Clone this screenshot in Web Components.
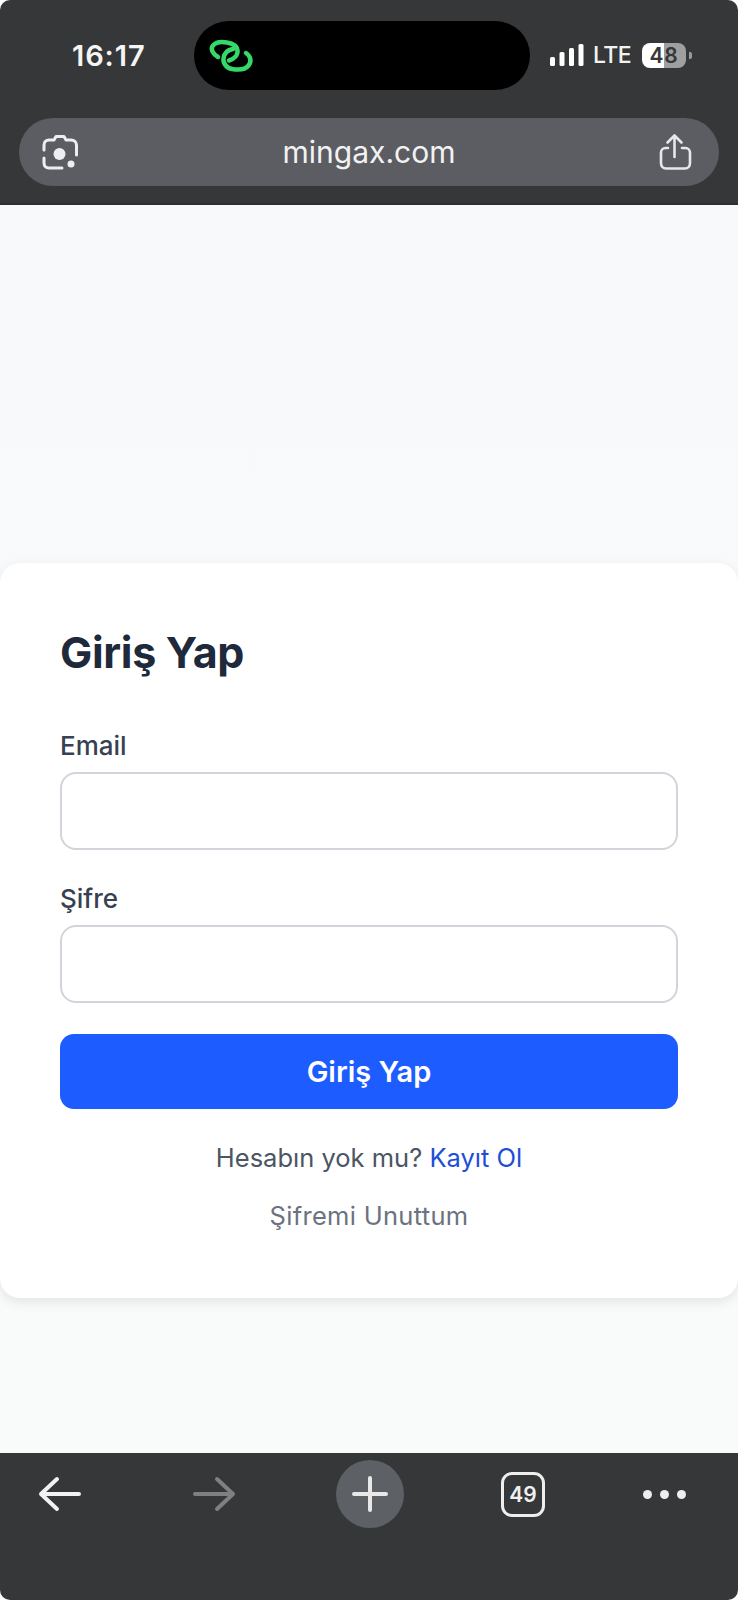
<!DOCTYPE html>
<html lang="tr">
<head>
<meta charset="utf-8">
<title>Giriş Yap</title>
<style>
  html, body { margin: 0; padding: 0; background: #fff; }
  body { width: 738px; height: 1600px; overflow: hidden; font-family: Inter, "Liberation Sans", sans-serif; }
</style>
</head>
<body>
<phone-page>
  <browser-top slot="top" time="16:17" url="mingax.com" battery="48"></browser-top>
  <login-card title="Giriş Yap">
    <form-field label="Email"></form-field>
    <form-field label="Şifre"></form-field>
    <submit-button>Giriş Yap</submit-button>
    <div slot="links" style="color:#4b5563">Hesabın yok mu? <span style="color:#1d4ed8">Kayıt Ol</span></div>
    <div slot="links" style="color:#6b7280;letter-spacing:.3px">Şifremi Unuttum</div>
  </login-card>
  <browser-bottom slot="bottom" tabs="49"></browser-bottom>
</phone-page>

<script>
// page shell: top bar, grey area with the card, bottom bar
class PhonePage extends HTMLElement {
  constructor() {
    super();
    this.attachShadow({ mode: "open" });
    this.shadowRoot.innerHTML = `
      <style>
        :host { display: flex; flex-direction: column; width: 738px; height: 1600px; }
        main { flex: 1; background: linear-gradient(#f8f9fb, #f9fafa); padding-top: 358px; box-sizing: border-box; }
      </style>
      <slot name="top"></slot>
      <main><slot></slot></main>
      <slot name="bottom"></slot>
    `;
  }
}

class BrowserTop extends HTMLElement {
  constructor() {
    super();
    this.attachShadow({ mode: "open" });
  }

  connectedCallback() {
    const time = this.getAttribute("time");
    const url = this.getAttribute("url");
    const battery = this.getAttribute("battery");
    this.shadowRoot.innerHTML = `
      <style>
        :host { display: block; height: 205px; box-sizing: border-box; background: #363739; border-bottom: 2px solid #2e2f31; border-radius: 10px 10px 0 0; color: #fff; font-family: Inter, "Liberation Sans", sans-serif; }
        .status { display: flex; align-items: center; height: 69px; padding-top: 21px; }
        .time { width: 194px; box-sizing: border-box; padding-left: 72px; font-size: 29px; font-weight: 600; letter-spacing: .9px; color: #f5f5f5; }
        .island { width: 336px; height: 69px; border-radius: 35px; background: #000; position: relative; }
        .island svg { position: absolute; left: 6px; top: 9px; }
        .right { display: flex; align-items: center; margin-left: 20px; margin-top: -1px; }
        .lte { font-size: 23px; font-weight: 500; margin: 0 11px 0 9px; color: #f2f2f2; letter-spacing: -.6px; }
        .batt { width: 44px; height: 25px; border-radius: 8px; overflow: hidden; background: linear-gradient(90deg, #fff 0 49%, #9f9f9f 49%); color: #363739; font-size: 21px; font-weight: 600; line-height: 25px; text-align: center; letter-spacing: .6px; }
        .nub { width: 3px; height: 7px; background: #9a9a9a; border-radius: 0 2px 2px 0; margin-left: 3px; }
        .bar { display: flex; align-items: center; justify-content: space-between; margin: 28px 19px 0 19px; height: 68px; border-radius: 34px; background: #5b5d63; padding: 0 19px 0 16px; position: relative; }
        .url { position: absolute; left: 0; right: 0; text-align: center; font-size: 30px; color: #f2f2f2; line-height: 66px; }
        .bar svg { display: block; position: relative; margin-top: -4px; }
      </style>
      <div class="status">
        <div class="time">${time}</div>
        <div class="island">
          <svg width="60" height="50" viewBox="0 0 60 50" fill="none" stroke="#34d96a" stroke-width="4.500" stroke-linecap="round" stroke-linejoin="round">
            <path d="M18 27 C13 24 10 19 13 15.500 C16 12 22 11.500 27 12.500 C33 13.500 37 16 37.500 20.500 C38 25 34.500 29 29 30.500"/>
            <path d="M33 19 C27 20 24 24 23.500 28.500 C23 33.500 26.500 38 32 39 C38 40 45 40 48.500 35.500 C52 31 50.500 26 46 23"/>
          </svg>
        </div>
        <div class="right">
          <svg width="34" height="22" viewBox="0 0 34 22" fill="#fff">
            <rect x="0" y="13" width="5" height="9" rx="1.5"/>
            <rect x="9.500" y="8" width="5" height="14" rx="1.5"/>
            <rect x="19" y="4" width="5" height="18" rx="1.5"/>
            <rect x="28.500" y="0" width="5" height="22" rx="1.5"/>
          </svg>
          <span class="lte">LTE</span>
          <div class="batt">${battery}</div>
          <div class="nub"></div>
        </div>
      </div>
      <div class="bar">
        <svg width="50" height="50" viewBox="0 0 50 50" fill="none" stroke="#eceef2" stroke-width="3" stroke-linecap="round" stroke-linejoin="round">
          <path d="M9 25 V20 C9 17 11 15 14 15 H19 L21 11.500 H29 L31 15 H36 C39 15 41.500 17 41.500 20 V30"/>
          <path d="M9 33 V38 C9 41 11 43 14 43 H27"/>
          <circle cx="24.500" cy="29" r="6" fill="#eceef2" stroke="none"/>
          <circle cx="36" cy="39" r="3.500" fill="#eceef2" stroke="none"/>
        </svg>
        <div class="url">${url}</div>
        <svg width="50" height="50" viewBox="0 0 50 50" fill="none" stroke="#e6e8ea" stroke-width="2.6" stroke-linecap="round" stroke-linejoin="round">
          <path d="M24.500 32 V11 M17.500 17.500 L24.500 10.500 L31.500 17.500"/>
          <path d="M18 23 H15.500 C13 23 11 25 11 27.500 V38 C11 41 13 43.500 16 43.500 H35 C38 43.500 40 41 40 38 V27.500 C40 25 38 23 35.500 23 H32"/>
        </svg>
      </div>
    `;
  }
}

class LoginCard extends HTMLElement {
  constructor() {
    super();
    this.attachShadow({ mode: "open" });
  }

  connectedCallback() {
    this.shadowRoot.innerHTML = `
      <style>
        :host { display: block; height: 735px; box-sizing: border-box; background: #fff; border-radius: 20px; padding: 0 60px; box-shadow: 0 4px 12px rgba(0,0,0,.09); font-family: Inter, "Liberation Sans", sans-serif; }
        h1 { margin: 0; padding-top: 63px; height: 96px; font-size: 43px; line-height: 52px; font-weight: 700; color: #1e293b; letter-spacing: -.3px; }
        .fields { display: flex; flex-direction: column; gap: 25px; }
        .links { display: flex; flex-direction: column; align-items: center; gap: 29px; margin-top: 34px; font-size: 25.500px; line-height: 29px; }
      </style>
      <h1>${this.getAttribute("title")}</h1>
      <div class="fields"><slot></slot></div>
      <div class="links"><slot name="links"></slot></div>
    `;
  }
}

class FormField extends HTMLElement {
  constructor() {
    super();
    this.attachShadow({ mode: "open" });
  }

  connectedCallback() {
    this.shadowRoot.innerHTML = `
      <style>
        :host { display: block; font-family: Inter, "Liberation Sans", sans-serif; }
        label { display: block; font-size: 26px; line-height: 32px; height: 32px; padding-top: 8px; margin-bottom: 10px; color: #374151; font-weight: 500; }
        input { display: block; width: 100%; height: 78px; box-sizing: border-box; border: 2px solid #d1d5db; border-radius: 16px; background: #fff; outline: none; }
      </style>
      <label>${this.getAttribute("label")}</label>
      <input type="text">
    `;
  }
}

class SubmitButton extends HTMLElement {
  constructor() {
    super();
    this.attachShadow({ mode: "open" });
    this.shadowRoot.innerHTML = `
      <style>
        :host { display: block; margin-top: 6px; font-family: Inter, "Liberation Sans", sans-serif; }
        button { display: block; width: 100%; height: 75px; border: 0; border-radius: 14px; background: #1d5cff; color: #fff; font: 600 29px Inter, "Liberation Sans", sans-serif; }
      </style>
      <button type="button"><slot></slot></button>
    `;
  }
}

class BrowserBottom extends HTMLElement {
  constructor() {
    super();
    this.attachShadow({ mode: "open" });
  }

  connectedCallback() {
    this.shadowRoot.innerHTML = `
      <style>
        :host { display: block; height: 147px; background: #363739; border-radius: 0 0 10px 10px; font-family: Inter, "Liberation Sans", sans-serif; }
        .row { display: flex; align-items: center; height: 68px; padding: 7px 0 0 38px; }
        .fwd { margin-left: 110px; }
        .plus { width: 68px; height: 68px; margin-left: 100px; border-radius: 50%; background: #5d6165; display: flex; align-items: center; justify-content: center; }
        .tabs { width: 44px; height: 45px; margin-left: 97px; box-sizing: border-box; border: 3.5px solid #eeeeee; border-radius: 11px; color: #f0f0f0; font-size: 21px; font-weight: 600; display: flex; align-items: center; justify-content: center; }
        .dots { display: flex; gap: 8px; margin-left: 98px; }
        .dots i { width: 9px; height: 9px; border-radius: 50%; background: #eeeeee; }
        svg { display: block; }
      </style>
      <div class="row">
        <svg width="44" height="36" viewBox="0 0 44 36" fill="none" stroke="#f2f2f2" stroke-width="4" stroke-linecap="round" stroke-linejoin="round">
          <path d="M41 18 H3 M19 3 L3 18 L19 33"/>
        </svg>
        <svg class="fwd" width="44" height="36" viewBox="0 0 44 36" fill="none" stroke="#808080" stroke-width="4" stroke-linecap="round" stroke-linejoin="round">
          <path d="M3 18 H41 M25 3 L41 18 L25 33"/>
        </svg>
        <div class="plus">
          <svg width="36" height="36" viewBox="0 0 36 36" stroke="#e8e8e8" stroke-width="4" stroke-linecap="round"><path d="M2 18 H34 M18 2 V34"/></svg>
        </div>
        <div class="tabs">${this.getAttribute("tabs")}</div>
        <div class="dots"><i></i><i></i><i></i></div>
      </div>
    `;
  }
}

customElements.define("phone-page", PhonePage);
customElements.define("browser-top", BrowserTop);
customElements.define("login-card", LoginCard);
customElements.define("form-field", FormField);
customElements.define("submit-button", SubmitButton);
customElements.define("browser-bottom", BrowserBottom);
</script>
</body>
</html>
